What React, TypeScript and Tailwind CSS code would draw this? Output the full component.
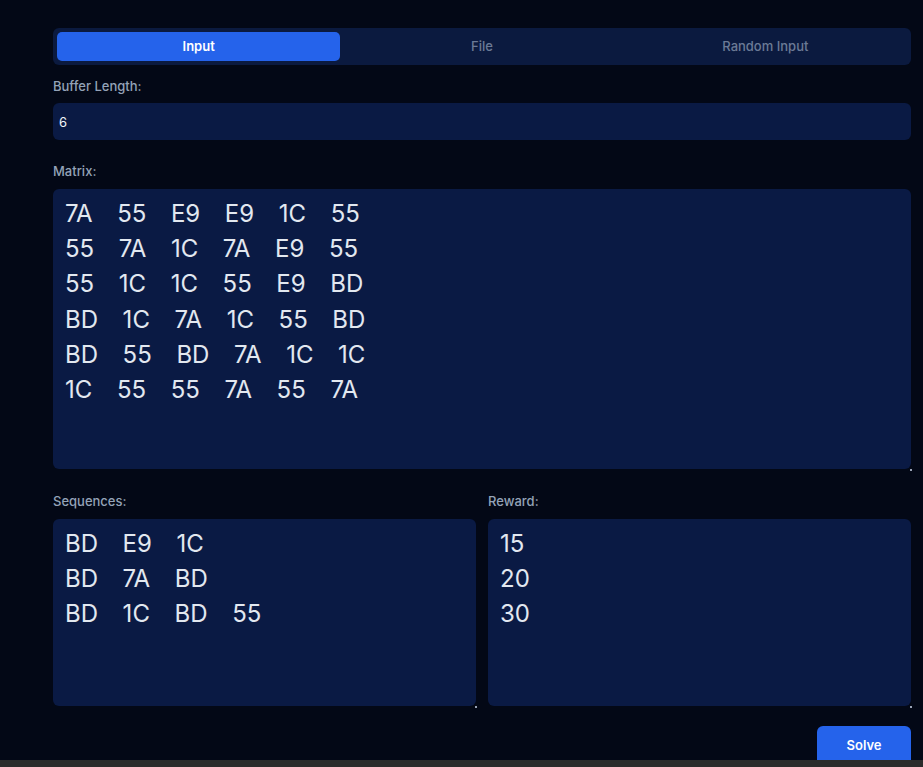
import { useState } from 'react'

const matrix = [
  ['7A', '55', 'E9', 'E9', '1C', '55'],
  ['55', '7A', '1C', '7A', 'E9', '55'],
  ['55', '1C', '1C', '55', 'E9', 'BD'],
  ['BD', '1C', '7A', '1C', '55', 'BD'],
  ['BD', '55', 'BD', '7A', '1C', '1C'],
  ['1C', '55', '55', '7A', '55', '7A'],
]

const sequences = [
  ['BD', 'E9', '1C'],
  ['BD', '7A', 'BD'],
  ['BD', '1C', 'BD', '55'],
]

const rewards = ['15', '20', '30']

const join = (rows: string[][]) => rows.map((r) => r.join('    ')).join('\n')

const tabs = ['Input', 'File', 'Random Input']

interface BoxProps {
  value: string
  className?: string
}

// textarea with the little corner grip seen in the screenshot
const Box = ({ value, className }: BoxProps) => (
  <div className="relative">
    <textarea
      defaultValue={value}
      spellCheck={false}
      className={`block w-full resize-none rounded-md bg-[#0a1a44] px-3 pt-[7px] text-[24px] leading-[35.2px] [word-spacing:-0.6px] text-[#e2e8f0] outline-none ${className ?? ''}`}
    />
    <span className="absolute -bottom-[2px] -right-[1px] h-[2px] w-[2px] bg-[#9aa3b5]" />
  </div>
)

export default function App() {
  const [tab, setTab] = useState('Input')

  return (
    <div
      className="min-h-[767px] bg-[#030816] pl-[53px] pr-[12px] pt-[28px]"
      style={{ fontFamily: 'Inter, "Noto Sans", sans-serif' }}
    >
      <div className="grid h-[37px] grid-cols-3 rounded-md bg-[#0b1a3f] p-1">
        {tabs.map((t) => (
          <button
            key={t}
            onClick={() => setTab(t)}
            className={`rounded-[5px] text-[13px] ${
              tab === t ? 'bg-[#2563eb] font-semibold text-white' : 'font-medium text-[#6b7a96]'
            }`}
          >
            {t}
          </button>
        ))}
      </div>

      <label className="mt-[11px] mb-[7px] block text-[13px] font-medium leading-5 text-[#94a3b8]">
        Buffer Length:
      </label>
      <input
        defaultValue="6"
        className="block h-[37px] w-full rounded-md bg-[#0a1a44] px-[6px] text-[13px] text-[#f1f5f9] outline-none"
      />

      <label className="mt-[21px] mb-2 block text-[13px] font-medium leading-5 text-[#94a3b8]">
        Matrix:
      </label>
      <Box value={join(matrix)} className="h-[280px]" />

      <div className="mt-[22px] grid grid-cols-2 gap-3">
        <div>
          <label className="mb-2 block text-[13px] font-medium leading-5 text-[#94a3b8]">
            Sequences:
          </label>
          <Box value={join(sequences)} className="h-[187px]" />
        </div>
        <div>
          <label className="mb-2 block text-[13px] font-medium leading-5 text-[#94a3b8]">
            Reward:
          </label>
          <Box value={rewards.join('\n')} className="h-[187px]" />
        </div>
      </div>

      <div className="mt-5 flex justify-end">
        <button className="h-10 w-[94px] rounded-md bg-[#2563eb] text-[13px] font-semibold text-white">
          Solve
        </button>
      </div>

      <div className="fixed bottom-0 left-0 right-0 h-[7px] bg-[#2b2b2b]" />
    </div>
  )
}
